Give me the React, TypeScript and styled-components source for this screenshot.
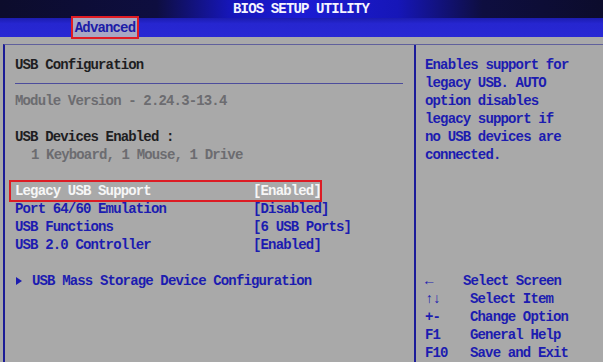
import styled, { createGlobalStyle } from "styled-components";

const GlobalStyle = createGlobalStyle`
	html, body {
		margin: 0;
		padding: 0;
		background: #a9a9a9;
	}
	body {
		font-family: "Liberation Mono", "DejaVu Sans Mono", monospace;
		font-size: 14px;
		font-weight: bold;
		letter-spacing: -0.85px;
	}
`;

const settings = [
	{ label: "Legacy USB Support", value: "[Enabled]", selected: true },
	{ label: "Port 64/60 Emulation", value: "[Disabled]" },
	{ label: "USB Functions", value: "[6 USB Ports]" },
	{ label: "USB 2.0 Controller", value: "[Enabled]" },
];

const helpLines = [
	"Enables support for",
	"legacy USB. AUTO",
	"option disables",
	"legacy support if",
	"no USB devices are",
	"connected.",
];

const keys = [
	{ key: "←", text: "Select Screen", shift: true },
	{ key: "↑↓", text: "Select Item" },
	{ key: "+-", text: "Change Option" },
	{ key: "F1", text: "General Help" },
	{ key: "F10", text: "Save and Exit" },
];

export default function App() {
	return (
		<Screen>
			<GlobalStyle />
			<TitleBar>BIOS SETUP UTILITY</TitleBar>
			<TabBar>
				<Tab>Advanced</Tab>
			</TabBar>
			<Body>
				<Panel>
					<MainPane>
						<Line $tone="dark">USB Configuration</Line>
						<Separator />
						<Line $tone="gray">Module Version - 2.24.3-13.4</Line>
						<Line />
						<Line $tone="dark">USB Devices Enabled :</Line>
						<Line $tone="gray" $indent>
							1 Keyboard, 1 Mouse, 1 Drive
						</Line>
						<Line />
						{settings.map((s) => (
							<SettingRow key={s.label} $selected={s.selected}>
								<span>{s.label}</span>
								<span>{s.value}</span>
							</SettingRow>
						))}
						<Line />
						<SubMenu>
							<Arrow />
							USB Mass Storage Device Configuration
						</SubMenu>
					</MainPane>
					<HelpPane>
						<div>
							{helpLines.map((l) => (
								<Line key={l}>{l}</Line>
							))}
						</div>
						<KeyList>
							{keys.map((k) => (
								<KeyRow key={k.key}>
									<span>{k.key}</span>
									<KeyText $shift={k.shift}>{k.text}</KeyText>
								</KeyRow>
							))}
						</KeyList>
					</HelpPane>
				</Panel>
			</Body>
		</Screen>
	);
}

//style_components
const Screen = styled.div`
	width: 603px;
	height: 362px;
	overflow: hidden;
	display: flex;
	flex-direction: column;
	background: #a9a9a9;
`;

const TitleBar = styled.div`
	height: 18px;
	line-height: 18px;
	text-align: center;
	color: #f4f4ff;
	background: linear-gradient(
		90deg,
		#0c0c2c 0%,
		#0e0e40 26%,
		#1616b8 38%,
		#1c1cd4 50%,
		#1616b8 66%,
		#0e0e40 80%,
		#0c0c2c 100%
	);
	padding-right: 1px;
`;

const TabBar = styled.div`
	height: 19px;
	display: flex;
	padding-left: 73px;
	background: linear-gradient(180deg, #1c1cb0 0%, #2626d0 30%, #2828d4 100%);
`;

const Tab = styled.div`
	height: 19px;
	width: 64px;
	line-height: 20px;
	text-align: center;
	color: #1c1ca8;
	background: #a8a8c4;
	outline: 2px solid #e01c24;
	position: relative;
	z-index: 1;
`;

const Body = styled.div`
	flex: 1;
	padding: 7px 0 0 3px;
	display: flex;
`;

const Panel = styled.div`
	flex: 1;
	display: grid;
	grid-template-columns: 411px 1fr;
	border-top: 1px solid #60609c;
	border-left: 2px solid #1c1c96;
`;

const MainPane = styled.div`
	padding: 11px 0 0 10px;
	border-right: 2px solid #1c1c9a;
`;

const Line = styled.div<{ $tone?: "dark" | "gray"; $indent?: boolean }>`
	height: 18px;
	line-height: 18px;
	white-space: pre;
	color: ${(p) =>
		p.$tone === "dark" ? "#1e1e22" : p.$tone === "gray" ? "#6c6c70" : "#1c1cb0"};
	padding-left: ${(p) => (p.$indent ? "16px" : "0")};
`;

const Separator = styled.div`
	height: 18px;
	margin-right: 11px;
	display: flex;
	align-items: center;
	&::before {
		content: "";
		flex: 1;
		height: 1px;
		background: #4c4c9c;
	}
`;

const SettingRow = styled.div<{ $selected?: boolean }>`
	height: 18px;
	line-height: 18px;
	display: grid;
	grid-template-columns: 238px auto;
	color: ${(p) => (p.$selected ? "#f6f6f6" : "#1c1cb0")};
	${(p) =>
		p.$selected &&
		`
		margin-left: -4px;
		padding-left: 4px;
		width: 305px;
		outline: 2px solid #dc1c24;
		outline-offset: 0;
	`}
`;

const SubMenu = styled.div`
	height: 18px;
	line-height: 18px;
	display: flex;
	align-items: center;
	color: #1c1cb0;
`;

const Arrow = styled.span`
	width: 0;
	height: 0;
	border-top: 4px solid transparent;
	border-bottom: 4px solid transparent;
	border-left: 6px solid #1c1cb0;
	margin: 0 10px 0 1px;
`;

const HelpPane = styled.div`
	padding: 11px 0 0 9px;
	display: flex;
	flex-direction: column;
`;

const KeyList = styled.div`
	margin-top: 108px;
`;

const KeyRow = styled.div`
	height: 18px;
	line-height: 18px;
	display: grid;
	grid-template-columns: 45px auto;
	color: #1c1cb0;
`;

const KeyText = styled.span<{ $shift?: boolean }>`
	margin-left: ${(p) => (p.$shift ? "-7px" : "0")};
`;
